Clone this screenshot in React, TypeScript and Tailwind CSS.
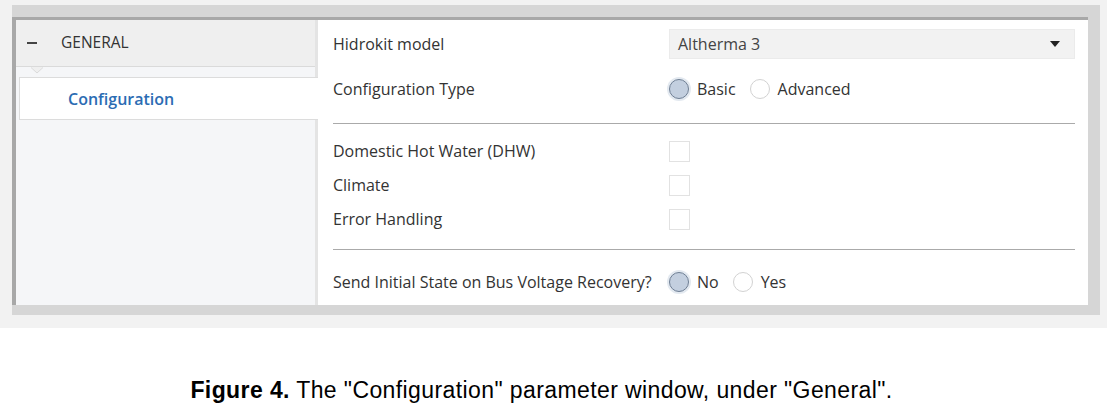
import React from 'react';

const uiFont = { fontFamily: '"Open Sans", "Noto Sans", sans-serif' };

const Radio = ({ checked, label }: { checked?: boolean; label: string }) => (
  <div className="flex items-center">
    <span
      className={
        checked
          ? 'w-[20px] h-[20px] rounded-full border border-[#6f7f94] bg-[#c3cfdf] shadow-[0_0_0_2px_#e3e9f0]'
          : 'w-[20px] h-[20px] rounded-full border border-[#d2d2d2] bg-white'
      }
    />
    <span className="ml-[8px] mr-[14px] text-[#333]">{label}</span>
  </div>
);

const Checkbox = () => <span className="w-[21px] h-[21px] border border-[#e2e2e2] bg-white" />;

const Row = ({ label, h, children }: { label: string; h: string; children?: React.ReactNode }) => (
  <div className={`flex items-center ${h}`}>
    <div className="w-[336px] shrink-0 text-[#333]">{label}</div>
    {children}
  </div>
);

const App = () => {
  return (
    <div className="w-[1107px] h-[414px] bg-white overflow-hidden">
      {/* window with its shadow frame */}
      <div className="bg-[#f2f2f2] pt-[5px] pl-[12px] pr-[7px] pb-[13px]">
        <div className="bg-[#d6d6d6] pt-[12px] pr-[12px] pb-[10px]">
          <div
            className="flex h-[288px] border-t-[3px] border-l-[4px] border-[#a8a8a8] bg-white text-[16px]"
            style={uiFont}
          >
            {/* sidebar */}
            <div className="relative w-[302px] shrink-0 bg-[#f5f6f8] border-r-[3px] border-[#e4e4e4]">
              <div className="flex items-center h-[47px] bg-[#efefef] border-b border-[#dadada]">
                <span className="ml-[11px] w-[10px] h-[2px] bg-[#444]" />
                <span className="ml-[24px] text-[15.5px] text-[#333]">GENERAL</span>
              </div>
              <svg className="absolute left-[15px] top-[47px]" width="12" height="7" viewBox="0 0 12 7">
                <path d="M0 0 L6 6 L12 0 Z" fill="#efefef" />
                <path d="M0 0.5 L6 6 L12 0.5" fill="none" stroke="#dadada" strokeWidth="1" />
              </svg>
              <div className="mt-[10px] ml-[3px] -mr-[3px] h-[43px] flex items-center bg-white border-y border-l border-[#dcdcdc]">
                <span className="ml-[48px] text-[16px] font-semibold text-[#2b6cb3]">Configuration</span>
              </div>
            </div>

            {/* parameters */}
            <div className="flex-1 pl-[15px] pr-[13px]">
              <Row label="Hidrokit model" h="h-[48px]">
                <div className="flex-1 h-[30px] flex items-center justify-between pl-[8px] pr-[14px] bg-[#f2f2f2] border border-[#ebebeb] text-[#444]">
                  <span>Altherma 3</span>
                  <svg width="10" height="6" viewBox="0 0 10 6">
                    <path d="M0 0 H10 L5 6 Z" fill="#222" />
                  </svg>
                </div>
              </Row>
              <Row label="Configuration Type" h="h-[42px]">
                <Radio checked label="Basic" />
                <Radio label="Advanced" />
              </Row>
              <div className="mt-[13px] h-px bg-[#aaaaaa]" />
              <div className="mt-[10px]">
                <Row label="Domestic Hot Water (DHW)" h="h-[34px]">
                  <Checkbox />
                </Row>
                <Row label="Climate" h="h-[34px]">
                  <Checkbox />
                </Row>
                <Row label="Error Handling" h="h-[34px]">
                  <Checkbox />
                </Row>
              </div>
              <div className="mt-[13px] h-px bg-[#aaaaaa]" />
              <div className="pt-[16px]">
                <Row label="Send Initial State on Bus Voltage Recovery?" h="h-[32px]">
                  <Radio checked label="No" />
                  <Radio label="Yes" />
                </Row>
              </div>
            </div>
          </div>
        </div>
      </div>

      {/* caption */}
      <div
        className="mt-[45px] pr-[24px] text-center text-[23px] tracking-[0.4px] text-black"
        style={{ fontFamily: '"Liberation Sans", Arial, sans-serif' }}
      >
        <span className="font-bold">Figure 4.</span> The "Configuration" parameter window, under "General".
      </div>
    </div>
  );
};

export default App;
